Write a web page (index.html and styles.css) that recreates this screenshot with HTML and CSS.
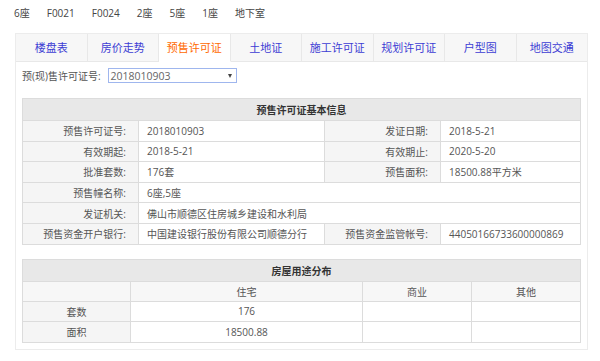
FILE: index.html
```html
<!DOCTYPE html>
<html lang="zh-CN">
<head>
    <meta charset="UTF-8">
    <title>预售许可证</title>
    <link rel="stylesheet" href="styles.css">
</head>
<body>

    <div class="buildings">
        <span>6座</span>
        <span>F0021</span>
        <span>F0024</span>
        <span>2座</span>
        <span>5座</span>
        <span>1座</span>
        <span>地下室</span>
    </div>

    <div class="panel">
        <ul class="tabs">
            <li>楼盘表</li>
            <li>房价走势</li>
            <li class="active">预售许可证</li>
            <li>土地证</li>
            <li>施工许可证</li>
            <li>规划许可证</li>
            <li>户型图</li>
            <li>地图交通</li>
        </ul>

        <div class="panel-body">
            <div class="select-row">
                <label>预(现)售许可证号:</label>
                <div class="select">
                    <span>2018010903</span>
                    <i class="arrow"></i>
                </div>
            </div>

            <!-- 基本信息 -->
            <table class="info">
                <colgroup>
                    <col style="width:116px">
                    <col style="width:186px">
                    <col style="width:116px">
                    <col>
                </colgroup>
                <tr><th colspan="4">预售许可证基本信息</th></tr>
                <tr>
                    <td class="label">预售许可证号:</td><td>2018010903</td>
                    <td class="label">发证日期:</td><td>2018-5-21</td>
                </tr>
                <tr>
                    <td class="label">有效期起:</td><td>2018-5-21</td>
                    <td class="label">有效期止:</td><td>2020-5-20</td>
                </tr>
                <tr>
                    <td class="label">批准套数:</td><td>176套</td>
                    <td class="label">预售面积:</td><td>18500.88平方米</td>
                </tr>
                <tr>
                    <td class="label">预售幢名称:</td><td colspan="3">6座,5座</td>
                </tr>
                <tr>
                    <td class="label">发证机关:</td><td colspan="3">佛山市顺德区住房城乡建设和水利局</td>
                </tr>
                <tr>
                    <td class="label">预售资金开户银行:</td><td>中国建设银行股份有限公司顺德分行</td>
                    <td class="label">预售资金监管帐号:</td><td>44050166733600000869</td>
                </tr>
            </table>

            <!-- 房屋用途分布 -->
            <table class="usage">
                <colgroup>
                    <col style="width:108px">
                    <col style="width:232px">
                    <col style="width:109px">
                    <col>
                </colgroup>
                <tr><th colspan="4">房屋用途分布</th></tr>
                <tr class="sub">
                    <td></td><td>住宅</td><td>商业</td><td>其他</td>
                </tr>
                <tr>
                    <td class="label">套数</td><td>176</td><td></td><td></td>
                </tr>
                <tr>
                    <td class="label">面积</td><td>18500.88</td><td></td><td></td>
                </tr>
            </table>
        </div>
    </div>

</body>
</html>
```

FILE: styles.css
```css
body {
    margin: 0;
    font-family: "Open Sans", "Noto Sans CJK SC", sans-serif;
    font-size: 10px;
    color: #444;
    background-color: #fff;
}

.buildings {
    display: flex;
    padding: 6px 0 0 14px;
    height: 15px;
    line-height: 15px;
}

.buildings span {
    margin-right: 17px;
}

.panel {
    margin: 12px 0 0 15px;
    width: 571px;
    border: 1px solid #ececec;
}

.tabs {
    display: flex;
    margin: 0;
    padding: 0;
    list-style: none;
    background-color: #f7f7f7;
}

.tabs li {
    flex: 1;
    height: 27px;
    line-height: 27px;
    text-align: center;
    font-size: 11px;
    color: #3d3dd4; /* blue tab text */
    border-right: 1px solid #e8e8e8;
    border-bottom: 1px solid #e8e8e8;
}

.tabs li:last-child {
    border-right: none;
}

.tabs li.active {
    background-color: #fff;
    color: #ff6a00; /* orange for current tab */
    border-bottom-color: #fff;
}

.panel-body {
    padding: 6px 6px 6px 6px;
}

.select-row {
    display: flex;
    align-items: center;
    height: 15px;
}

.select-row label {
    margin-right: 7px;
    color: #555;
}

.select {
    display: flex;
    align-items: center;
    justify-content: space-between;
    width: 121px;
    height: 13px;
    padding: 0 4px 0 2px;
    border: 1px solid #9fb6ee;
    color: #666;
    font-size: 10.5px;
}

.arrow {
    width: 0;
    height: 0;
    border-left: 2.5px solid transparent;
    border-right: 2.5px solid transparent;
    border-top: 4px solid #444;
}

table {
    width: 100%;
    border-collapse: collapse;
    table-layout: fixed;
    color: #555;
}

table th,
table td {
    border: 1px solid #dcdcdc;
    padding: 0 8px;
    white-space: nowrap;
    overflow: hidden;
}

table th {
    height: 21px;
    background-color: #e8e8e8;
    color: #333;
    font-weight: bold;
}

table td {
    height: 19.6px;
}

.info {
    margin-top: 15px;
}

.info td.label {
    background-color: #f5f5f5;
    text-align: right;
    padding-right: 12px;
}

.usage {
    margin-top: 14px;
}

.usage td {
    text-align: center;
}

.usage tr.sub td {
    height: 19px;
    background-color: #f7f7f7;
}

.usage td.label {
    background-color: #f5f5f5;
}
```
